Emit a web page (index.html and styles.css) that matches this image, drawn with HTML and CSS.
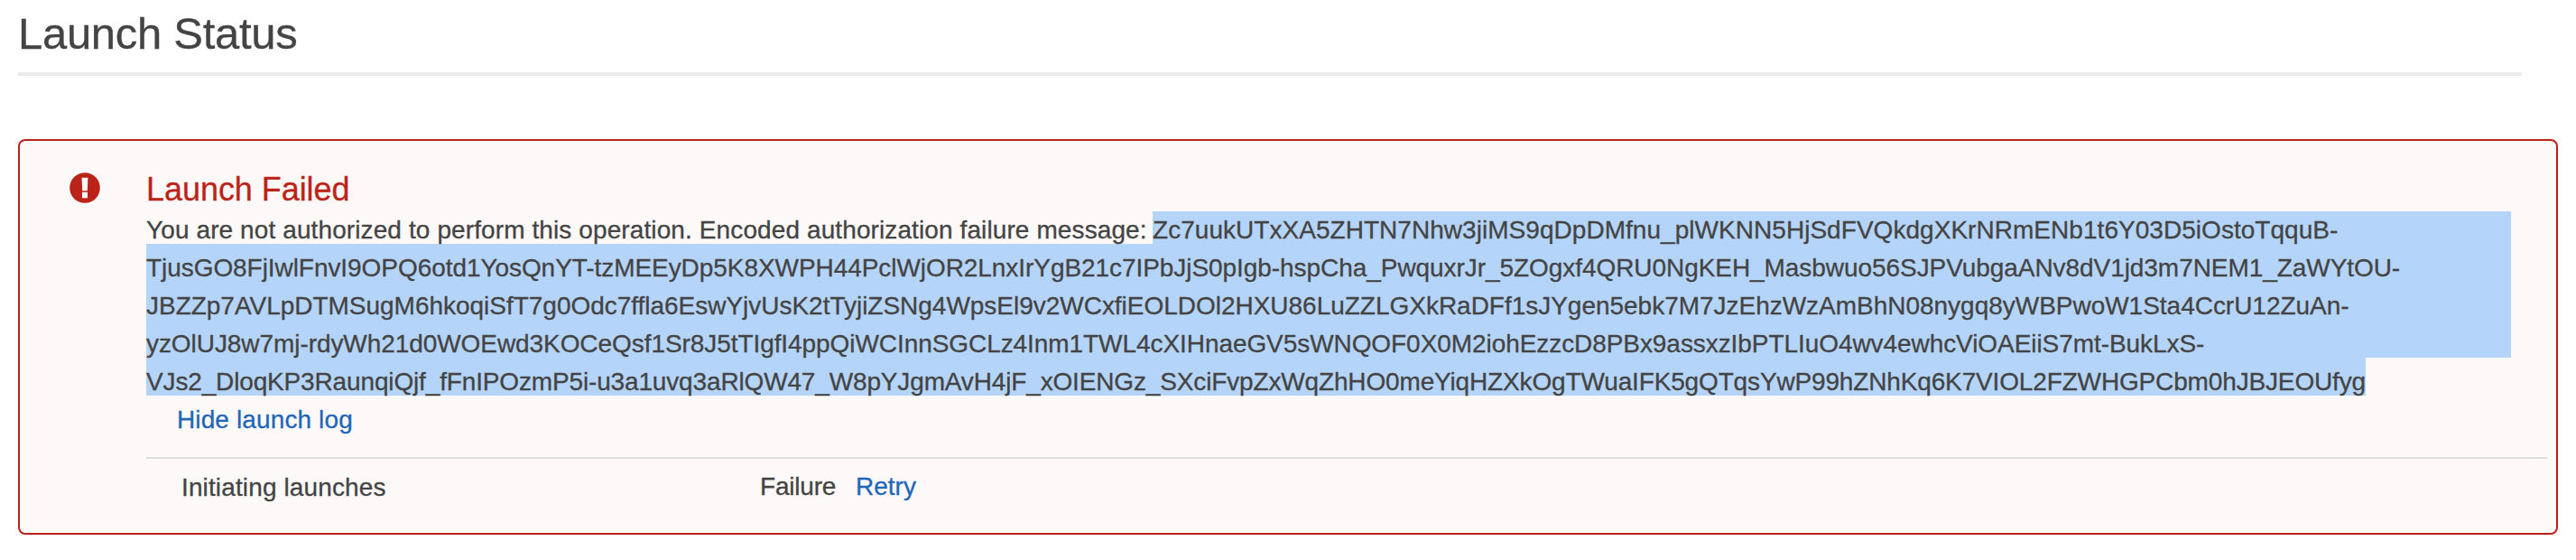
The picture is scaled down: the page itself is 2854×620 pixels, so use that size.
FILE: index.html
```
<!DOCTYPE html>
<html lang="en">
<head>
<meta charset="utf-8">
<title>Launch Status</title>
<link rel="stylesheet" href="styles.css">
</head>
<body>
<header class="page-header"><h1 class="page-title">Launch Status</h1></header>
<section class="alert">
  <svg class="alert-icon" viewBox="0 0 34 34" aria-hidden="true">
    <circle cx="17" cy="17" r="16.8" fill="#bb2318"/>
    <path d="M13.6 5.8h6.8l-.6 14.4h-5.6zM14 21.8h6v6.4h-6z" fill="#fff"/>
  </svg>
  <div class="alert-body">
    <h2 class="alert-title">Launch Failed</h2>
    <div class="message">
      <div class="line line-first"><span class="intro">You are not authorized to perform this operation. Encoded authorization failure message: </span><span class="selected code1">Zc7uukUTxXA5ZHTN7Nhw3jiMS9qDpDMfnu_plWKNN5HjSdFVQkdgXKrNRmENb1t6Y03D5iOstoTqquB-</span></div>
      <div class="line selected code2">TjusGO8FjIwlFnvI9OPQ6otd1YosQnYT-tzMEEyDp5K8XWPH44PclWjOR2LnxIrYgB21c7IPbJjS0pIgb-hspCha_PwquxrJr_5ZOgxf4QRU0NgKEH_Masbwuo56SJPVubgaANv8dV1jd3m7NEM1_ZaWYtOU-</div>
      <div class="line selected code3">JBZZp7AVLpDTMSugM6hkoqiSfT7g0Odc7ffla6EswYjvUsK2tTyjiZSNg4WpsEl9v2WCxfiEOLDOl2HXU86LuZZLGXkRaDFf1sJYgen5ebk7M7JzEhzWzAmBhN08nygq8yWBPwoW1Sta4CcrU12ZuAn-</div>
      <div class="line selected code4">yzOlUJ8w7mj-rdyWh21d0WOEwd3KOCeQsf1Sr8J5tTIgfI4ppQiWCInnSGCLz4Inm1TWL4cXIHnaeGV5sWNQOF0X0M2iohEzzcD8PBx9assxzIbPTLIuO4wv4ewhcViOAEiiS7mt-BukLxS-</div>
      <div class="line selected code5">VJs2_DloqKP3RaunqiQjf_fFnIPOzmP5i-u3a1uvq3aRlQW47_W8pYJgmAvH4jF_xOIENGz_SXciFvpZxWqZhHO0meYiqHZXkOgTWuaIFK5gQTqsYwP99hZNhKq6K7VIOL2FZWHGPCbm0hJBJEOUfyg</div>
    </div>
    <div class="toggle"><a class="link">Hide launch log</a></div>
    <div class="log">
      <span class="log-step">Initiating launches</span>
      <span class="log-status">Failure</span>
      <a class="link retry">Retry</a>
    </div>
  </div>
</section>
</body>
</html>
```
FILE: styles.css
```
* { box-sizing: border-box; }

body {
  margin: 0;
  padding: 10px 20px 0;
  background: #fff;
  color: #444;
  font: 28px/31px "Liberation Sans", Arial, sans-serif;
  -webkit-text-stroke: 0.3px;
}

h1, h2 { margin: 0; font-weight: 400; }

.page-header {
  width: 2774px;
  padding-bottom: 16px;
  border-bottom: 4px solid #ebebeb;
}

.page-title {
  font-size: 49px;
  line-height: 54px;
  letter-spacing: -0.3px;
}

.alert {
  display: flex;
  width: 2814px;
  height: 438px;
  margin-top: 70px;
  padding: 33px 10px 0 55px;
  border: 2px solid #bb2318;
  border-radius: 8px;
  background: #fdf9f8;
}

.alert-icon {
  flex: none;
  width: 34px;
  height: 34px;
  margin: 2px 51px 0 0;
}

.alert-body { flex: 1; min-width: 0; }

.alert-title {
  margin: 0 0 4px;
  padding-top: 1px;
  color: #bb2318;
  font-size: 36px;
  line-height: 40px;
  letter-spacing: -0.05px;
}

.message { width: 2620px; }

.line { height: 42px; padding-top: 11px; white-space: pre; }
.line-first { display: flex; height: 36px; padding-top: 0; }
.line-first > span { padding-top: 5px; }

.selected { background: #b5d4f9; }

.intro { width: 1115px; letter-spacing: 0.105px; }
.code1 { flex: 1; letter-spacing: 0.04px; }
.code2 { letter-spacing: -0.06px; }
.code3 { letter-spacing: -0.02px; }
.code4 { letter-spacing: -0.068px; }
.code5 { width: 2459px; letter-spacing: -0.149px; }

.link { color: #1f66b8; }

.toggle {
  padding: 11px 0 26px 34px;
  letter-spacing: 0.12px;
}

.log {
  display: flex;
  padding: 16px 0 0 39px;
  border-top: 2px solid #dcdfdc;
}

.log-step { width: 641px; letter-spacing: 0.13px; }
.log-status { width: 106px; margin-top: -1px; letter-spacing: -0.2px; }
.retry { margin-top: -1px; }
```
